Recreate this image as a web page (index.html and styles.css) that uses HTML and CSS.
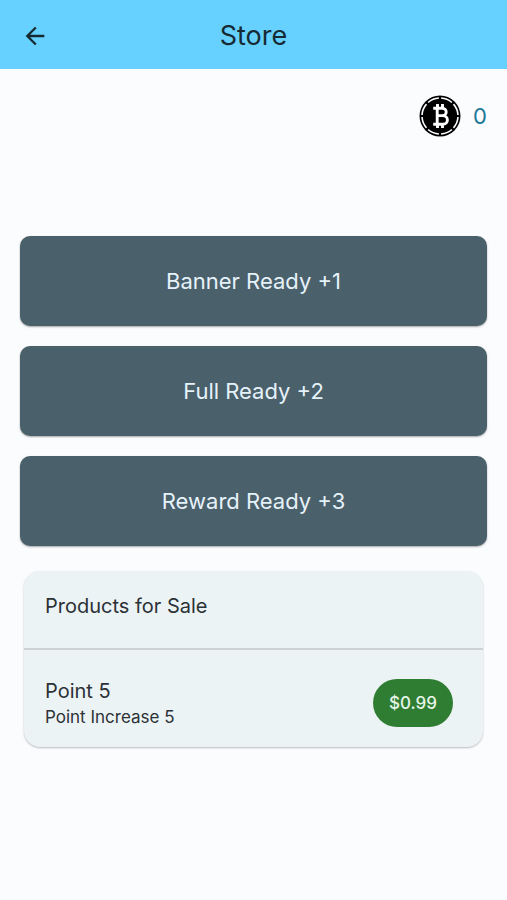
FILE: index.html
```html
<!DOCTYPE html>
<html lang="en">
<head>
<meta charset="utf-8">
<meta name="viewport" content="width=device-width, initial-scale=1">
<title>Store</title>
<link rel="stylesheet" href="styles.css">
</head>
<body>
<header class="app-bar">
  <button class="back" type="button" aria-label="Back">
    <svg viewBox="0 0 24 24" width="28" height="28" aria-hidden="true"><path d="M20 11H7.83l5.59-5.59L12 4l-8 8 8 8 1.41-1.41L7.83 13H20z"/></svg>
  </button>
  <h1 class="title">Store</h1>
</header>
<main class="content">
  <div class="balance">
    <svg class="coin" viewBox="0 0 42 42" width="42" height="42" aria-hidden="true">
      <circle cx="21" cy="21" r="20.5"/>
      <circle class="ring" cx="21" cy="21" r="18" pathLength="80"/>
      <g class="mark">
        <path d="M14.2 13.2H23C28.6 13.2 28.6 20.6 23 20.6H18.2M18.2 20.6H23.6C30 20.6 30 29.2 23.6 29.2H14.2M18.2 13.2V29.2M18.5 9V13.2M23.5 9V13.2M18.5 29.2V33M23.5 29.2V33"/>
      </g>
    </svg>
    <span class="points">0</span>
  </div>
  <div class="rewards">
    <button class="reward" type="button">Banner Ready +1</button>
    <button class="reward" type="button">Full Ready +2</button>
    <button class="reward" type="button">Reward Ready +3</button>
  </div>
  <section class="products">
    <h2 class="products-title">Products for Sale</h2>
    <div class="product">
      <div class="product-text">
        <h3 class="product-name">Point 5</h3>
        <p class="product-note">Point Increase 5</p>
      </div>
      <button class="price" type="button">$0.99</button>
    </div>
  </section>
</main>
</body>
</html>
```
FILE: styles.css
```css
* { box-sizing: border-box; }

body {
  margin: 0;
  min-height: 100vh;
  background: #fafcfe;
  color: #2b3135;
  font-family: Inter, "Liberation Sans", sans-serif;
}

button {
  border: 0;
  font-family: inherit;
  cursor: pointer;
}

h1, h2, h3, p {
  margin: 0;
  font-weight: 400;
}

.app-bar {
  display: grid;
  grid-template-columns: 48px 1fr 48px;
  align-items: center;
  height: 69px;
  padding: 2px 11px 0;
  background: #66d1ff;
  color: #162a33;
}

.back {
  display: grid;
  place-items: center;
  height: 48px;
  padding: 0;
  background: none;
}

.back svg { fill: #162a33; }

.title {
  font-size: 27px;
  line-height: 32px;
  text-align: center;
}

.content { padding: 26px 20px; }

.balance {
  display: flex;
  align-items: center;
  justify-content: flex-end;
  gap: 12px;
}

.coin .ring {
  fill: none;
  stroke: #fff;
  stroke-width: 1.6;
  stroke-dasharray: 8.4 1.6;
  stroke-dashoffset: -0.8;
}

.coin .mark {
  fill: none;
  stroke: #fff;
  stroke-width: 2.9;
}

.points {
  color: #1b7797;
  font-size: 22px;
  line-height: 28px;
}

.rewards {
  display: grid;
  gap: 20px;
  margin-top: 99px;
}

.reward {
  height: 90px;
  border-radius: 10px;
  background: #4a606b;
  box-shadow: 0 1px 2px rgba(0, 0, 0, 0.35);
  color: #e6f2fa;
  font-size: 22px;
}

.products {
  margin: 25px 4px 0;
  border-radius: 16px;
  background: #ecf3f5;
  box-shadow: 0 1px 2px rgba(0, 0, 0, 0.25);
}

.products-title {
  padding: 21px 21px 28px;
  border-bottom: 2px solid #cdd3d5;
  font-size: 20px;
  line-height: 28px;
}

.product {
  display: flex;
  align-items: center;
  justify-content: space-between;
  padding: 27px 30px 18px 21px;
}

.product-name {
  font-size: 20px;
  line-height: 28px;
}

.product-note {
  font-size: 17px;
  line-height: 24px;
}

.price {
  height: 48px;
  padding: 0 16px;
  border-radius: 24px;
  background: #2f7d32;
  color: #e6f5e8;
  font-size: 17px;
  font-weight: 500;
}
```
